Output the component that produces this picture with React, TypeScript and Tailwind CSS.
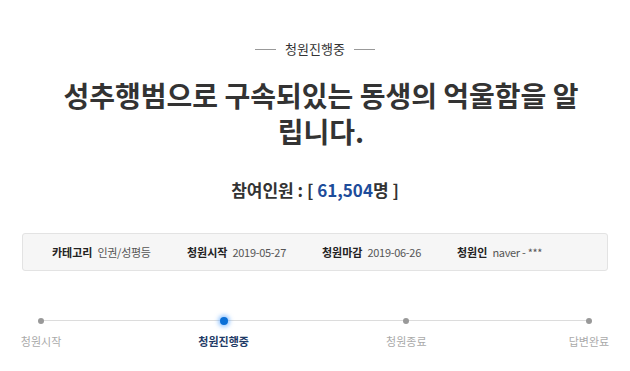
const FONT = { fontFamily: '"Noto Sans CJK KR", "Noto Sans", sans-serif' };

const info = [
  { label: '카테고리', value: '인권/성평등' },
  { label: '청원시작', value: '2019-05-27' },
  { label: '청원마감', value: '2019-06-26' },
  { label: '청원인', value: 'naver - ***' },
];

const steps = [
  { label: '청원시작', active: false },
  { label: '청원진행중', active: true },
  { label: '청원종료', active: false },
  { label: '답변완료', active: false },
];

export default function App() {
  return (
    <div className="min-h-[371px] w-[630px] bg-white" style={FONT}>
      {/* status */}
      <div className="flex items-center justify-center gap-[9px] pt-[39px] text-[13px] leading-[20px] text-[#333]">
        <span className="h-px w-[21px] bg-[#999]" />
        <span>청원진행중</span>
        <span className="h-px w-[21px] bg-[#999]" />
      </div>

      {/* title */}
      <div className="flex justify-center pl-[12px]">
        <h1 className="mt-[18px] w-[526px] text-center text-[28px] font-bold leading-[36px] text-[#333]">
          성추행범으로 구속되있는 동생의 억울함을 알립니다.
        </h1>
      </div>

      {/* count */}
      <div className="mt-[29px] text-center text-[17px] font-bold leading-[24px] text-[#333]">
        참여인원 : [ <span className="text-[#1d4c9a]">61,504</span>명 ]
      </div>

      {/* info box */}
      <div className="mx-[22px] mt-[31px] flex h-[38px] items-center rounded-[3px] border border-[#e3e3e3] bg-[#f6f6f6] pl-[29px] text-[11px]">
        {info.map((it) => (
          <div key={it.label} className="flex w-[135px] items-center gap-[5px]">
            <span className="font-bold text-[#222]">{it.label}</span>
            <span className="tracking-[-0.3px] text-[#555]">{it.value}</span>
          </div>
        ))}
      </div>

      {/* progress */}
      <div className="relative mx-[41px] mt-[44px]">
        <div className="absolute left-0 right-0 top-[5px] h-px bg-[#dcdcdc]" />
        <div className="relative flex justify-between">
          {steps.map((s) => (
            <div key={s.label} className="flex w-0 flex-col items-center">
              <div className="flex h-[11px] items-center justify-center">
                {s.active ? (
                  <span className="h-[8px] w-[8px] shrink-0 rounded-full bg-[#0b6fd6] shadow-[0_0_4px_2px_rgba(80,160,255,0.6)]" />
                ) : (
                  <span className="h-[6px] w-[6px] shrink-0 rounded-full bg-[#999]" />
                )}
              </div>
              <span
                className={`mt-[7px] whitespace-nowrap text-[11px] leading-[16px] ${
                  s.active ? 'font-bold text-[#1e3a66]' : 'text-[#aaa]'
                }`}
              >
                {s.label}
              </span>
            </div>
          ))}
        </div>
      </div>
    </div>
  );
}
